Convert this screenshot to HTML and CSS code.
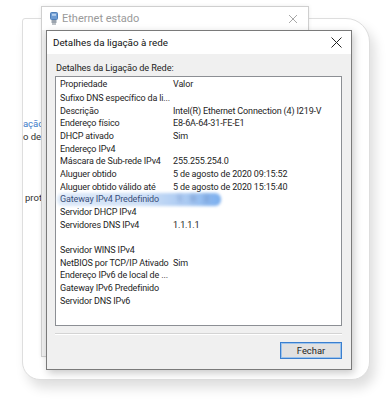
FILE: index.html
```html
<!DOCTYPE html>
<html lang="pt">
<head>
  <meta charset="UTF-8" />
  <meta name="viewport" content="width=device-width, initial-scale=1" />
  <title>Detalhes da ligação à rede</title>
  <link rel="stylesheet" href="styles.css">
</head>
<body>

<div class="scene">

  <!-- settings window in the back, framed as a rounded card -->
  <div class="card">
    <span class="bg-text link t1">ligação</span>
    <span class="bg-text t2">Estado de</span>
    <span class="bg-text t3">protocolo</span>
  </div>

  <!-- Ethernet estado (inactive window) -->
  <div class="win-eth">
    <div class="eth-title">
      <svg class="eth-icon" width="8" height="13" viewBox="0 0 8 13">
        <rect x="0.5" y="0.5" width="7" height="7" rx="1" fill="#6e9bd1" stroke="#4f7fb8"/>
        <rect x="2" y="1.8" width="4" height="2" fill="#b9d2ee"/>
        <rect x="1.5" y="8" width="5" height="3" fill="#9aa3ad"/>
        <rect x="2.5" y="11" width="1" height="2" fill="#7d8690"/>
        <rect x="4.5" y="11" width="1" height="2" fill="#7d8690"/>
      </svg>
      <span class="eth-name">Ethernet estado</span>
      <svg class="eth-close" width="10" height="10" viewBox="0 0 10 10">
        <path d="M1 1 L9 9 M9 1 L1 9" stroke="#a8a8a8" stroke-width="1"/>
      </svg>
    </div>
  </div>

  <!-- Detalhes da ligação à rede (active dialog) -->
  <div class="dialog">
    <div class="dlg-title">
      <span>Detalhes da ligação à rede</span>
      <svg class="dlg-close" width="11" height="11" viewBox="0 0 11 11">
        <path d="M0.5 0.5 L10.5 10.5 M10.5 0.5 L0.5 10.5" stroke="#222" stroke-width="1"/>
      </svg>
    </div>
    <div class="dlg-body">
      <div class="caption">Detalhes da Ligação de Rede:</div>
      <div class="list">
        <div class="row head"><span class="k">Propriedade</span><span class="v">Valor</span></div>
        <div class="row"><span class="k">Sufixo DNS específico da li...</span><span class="v"></span></div>
        <div class="row"><span class="k">Descrição</span><span class="v">Intel(R) Ethernet Connection (4) I219-V</span></div>
        <div class="row"><span class="k">Endereço físico</span><span class="v">E8-6A-64-31-FE-E1</span></div>
        <div class="row"><span class="k">DHCP ativado</span><span class="v">Sim</span></div>
        <div class="row"><span class="k">Endereço IPv4</span><span class="v"></span></div>
        <div class="row"><span class="k">Máscara de Sub-rede IPv4</span><span class="v">255.255.254.0</span></div>
        <div class="row"><span class="k">Aluguer obtido</span><span class="v">5 de agosto de 2020 09:15:52</span></div>
        <div class="row"><span class="k">Aluguer obtido válido até</span><span class="v">5 de agosto de 2020 15:15:40</span></div>
        <div class="row sel"><span class="k">Gateway IPv4 Predefinido</span><span class="v blurred">1 9 2</span></div>
        <div class="row"><span class="k">Servidor DHCP IPv4</span><span class="v"></span></div>
        <div class="row"><span class="k">Servidores DNS IPv4</span><span class="v">1.1.1.1</span></div>
        <div class="row"><span class="k"></span><span class="v"></span></div>
        <div class="row"><span class="k">Servidor WINS IPv4</span><span class="v"></span></div>
        <div class="row"><span class="k">NetBIOS por TCP/IP Ativado</span><span class="v">Sim</span></div>
        <div class="row"><span class="k">Endereço IPv6 de local de ...</span><span class="v"></span></div>
        <div class="row"><span class="k">Gateway IPv6 Predefinido</span><span class="v"></span></div>
        <div class="row"><span class="k">Servidor DNS IPv6</span><span class="v"></span></div>
      </div>
      <div class="separator"></div>
      <div class="actions">
        <button class="btn">Fechar</button>
      </div>
    </div>
  </div>

</div>

</body>
</html>
```

FILE: styles.css
```css
* {
  margin: 0; padding: 0; box-sizing: border-box;
}
body {
  background: #fff;
  font-family: Roboto, "Liberation Sans", sans-serif;
  color: #1e1e1e;
  overflow: hidden;
}
.scene {
  position: relative;
  width: 392px;
  height: 404px;
  overflow: hidden;
}

/* back card */
.card {
  position: absolute;
  left: 22px;
  top: 18px;
  width: 348px;
  height: 362px;
  background: #fff;
  border: 1px solid #dedede;
  border-radius: 3px 24px 18px 18px;
  box-shadow: 5px 8px 12px rgba(0,0,0,0.13);
  overflow: hidden;
}
.bg-text {
  position: absolute;
  font-size: 9.5px;
  line-height: 12px;
  color: #333;
  white-space: nowrap;
}
.bg-text.link { color: #3d7cc9; }
.t1 { left: -10px; top: 99px; }
.t2 { left: -24px; top: 112px; }
.t3 { left: 2px; top: 173px; }

/* Ethernet estado window */
.win-eth {
  position: absolute;
  left: 41px;
  top: 6px;
  width: 268px;
  height: 351px;
  background: #f0f0f0;
  border: 1px solid #cfcfcf;
  box-shadow: 0 0 4px rgba(0,0,0,0.08);
}
.eth-title {
  height: 23px;
  background: #fff;
  display: flex;
  align-items: center;
  padding-left: 8px;
}
.eth-icon { margin-right: 4px; }
.eth-name {
  font-size: 11px;
  color: #9a9a9a;
  flex: 1;
}
.eth-close { margin-right: 10px; }

/* details dialog */
.dialog {
  position: absolute;
  left: 46px;
  top: 30px;
  width: 306px;
  height: 340px;
  background: #f0f0f0;
  border: 1px solid #7a7a7a;
  box-shadow: 2px 3px 8px rgba(0,0,0,0.22);
  display: flex;
  flex-direction: column;
}
.dlg-title {
  height: 23px;
  background: #fff;
  display: flex;
  align-items: center;
  justify-content: space-between;
  padding: 0 9px 0 6px;
  font-size: 9.8px;
  color: #111;
}
.dlg-body {
  flex: 1;
  padding: 8px 9px 0 8px;
}
.caption {
  font-size: 9.2px;
  letter-spacing: -0.1px;
  line-height: 12px;
  padding-left: 1px;
  margin-bottom: 2px;
}
.list {
  background: #fff;
  border: 1px solid #8c8f94;
  height: 250px;
  padding: 0 4px;
  font-size: 9px;
  letter-spacing: -0.15px;
}
.row {
  display: flex;
  height: 12.67px;
  line-height: 12.67px;
  position: relative;
  white-space: nowrap;
}
.row.head {
  height: 15px;
  line-height: 15px;
}
.row .k {
  width: 113px;
  overflow: hidden;
  position: relative;
}
.row .v {
  flex: 1;
  position: relative;
}
.row.sel::before {
  content: "";
  position: absolute;
  left: -3px;
  top: 0;
  width: 164px;
  height: 13px;
  border-radius: 6px;
  background: linear-gradient(90deg, #dde9f8 0%, #cfe0f6 50%, #a9c9f2 80%, #7aaeee 100%);
  filter: blur(1.5px);
}
.row.sel .k { color: #3b4f7a; }
.blurred {
  color: #6f8fc4;
  font-weight: bold;
  letter-spacing: 3px;
  filter: blur(2px);
  padding-left: 4px;
}
.separator {
  margin-top: 7px;
  height: 2px;
  border-top: 1px solid #d4d4d4;
  border-bottom: 1px solid #fff;
}
.actions {
  display: flex;
  justify-content: flex-end;
  padding-top: 7px;
}
.btn {
  width: 62px;
  height: 17px;
  background: #e1e1e1;
  border: 1px solid #3a7fcf;
  box-shadow: inset 0 0 0 1px #9cc3ec;
  font-family: inherit;
  font-size: 9.4px;
  color: #1e1e1e;
}
```
